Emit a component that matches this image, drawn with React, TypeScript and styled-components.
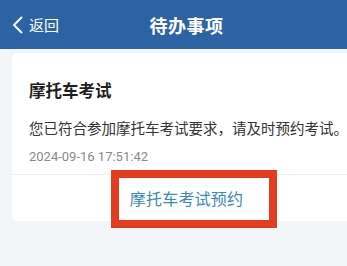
import React from "react";
import styled, { createGlobalStyle } from "styled-components";

const Global = createGlobalStyle`
  html, body { margin: 0; padding: 0; }
  body {
    width: 347px;
    height: 266px;
    overflow: hidden;
    background: #f3f6f8;
    font-family: "Noto Sans CJK SC", "Noto Sans", sans-serif;
  }
`;

const Page = styled.div`
  width: 347px;
  height: 266px;
  overflow: hidden;
  background: #f3f6f8;
`;

const Header = styled.div`
  height: 49px;
  background: #2c63a4;
  display: flex;
  align-items: center;
  position: relative;
  color: #ffffff;
`;

const Back = styled.div`
  display: flex;
  align-items: center;
  gap: 6px;
  padding-left: 12px;
  font-size: 15px;
  z-index: 1;
`;

const Title = styled.div`
  position: absolute;
  left: 0;
  right: 0;
  text-align: center;
  font-size: 18px;
  font-weight: 700;
  letter-spacing: 0.5px;
  margin-left: 26px;
`;

const Body = styled.div`
  padding: 4px 0 0 12px;
`;

const Card = styled.div`
  width: 349px;
  background: #ffffff;
  border-radius: 6px;
`;

const Content = styled.div`
  padding: 26px 0 8px 17px;
  display: flex;
  flex-direction: column;
`;

const CardTitle = styled.div`
  font-size: 16.5px;
  line-height: 22px;
  font-weight: 700;
  color: #1f1f1f;
`;

const Message = styled.div`
  margin-top: 17px;
  font-size: 14.5px;
  line-height: 20px;
  color: #333333;
  white-space: nowrap;
`;

const Time = styled.div`
  margin-top: 10px;
  font-family: "Roboto", "Noto Sans", sans-serif;
  font-size: 13px;
  line-height: 18px;
  color: #8a8a8a;
`;

const Footer = styled.div`
  border-top: 1px solid #eef0f2;
  height: 46px;
  display: flex;
  align-items: center;
  justify-content: center;
  position: relative;
`;

const Action = styled.div`
  font-size: 16px;
  color: #3a8bb5;
  letter-spacing: 0.2px;
`;

const Highlight = styled.div`
  position: absolute;
  left: 99px;
  top: -5px;
  width: 166px;
  height: 58px;
  box-sizing: border-box;
  border: 8px solid #e23c21;
`;

export default function App() {
  return (
    <Page>
      <Global />
      <Header>
        <Back>
          <svg width="11" height="18" viewBox="0 0 11 18">
            <path d="M9.5 1.5 L2 9 L9.5 16.5" fill="none" stroke="#ffffff" strokeWidth="2" strokeLinecap="round" strokeLinejoin="round" />
          </svg>
          <span>返回</span>
        </Back>
        <Title>待办事项</Title>
      </Header>
      <Body>
        <Card>
          <Content>
            <CardTitle>摩托车考试</CardTitle>
            <Message>您已符合参加摩托车考试要求，请及时预约考试。</Message>
            <Time>2024-09-16 17:51:42</Time>
          </Content>
          <Footer>
            <Action>摩托车考试预约</Action>
            <Highlight />
          </Footer>
        </Card>
      </Body>
    </Page>
  );
}
